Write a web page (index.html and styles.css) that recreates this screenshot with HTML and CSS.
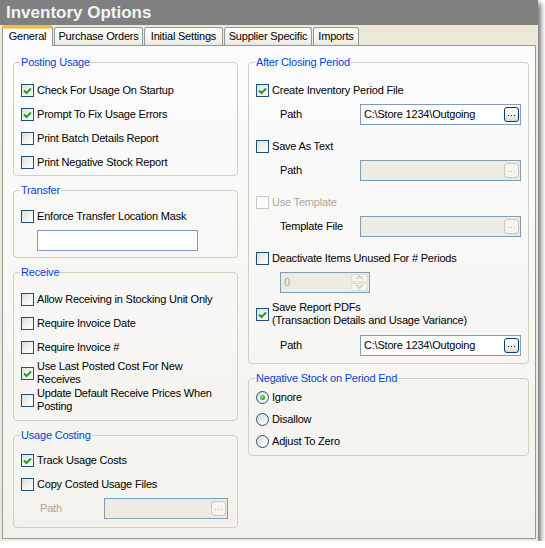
FILE: index.html
```html
<!DOCTYPE html>
<html>
<head>
<meta charset="utf-8">
<title>Inventory Options</title>
<link rel="stylesheet" href="styles.css">
</head>
<body>
<div class="window">
  <div class="titlebar">Inventory Options</div>
  <div class="tabs">
    <div class="tab active w-general">General</div>
    <div class="tab w-po">Purchase Orders</div>
    <div class="tab w-is">Initial Settings</div>
    <div class="tab w-ss">Supplier Specific</div>
    <div class="tab w-imp">Imports</div>
  </div>
  <div class="panel">
    <div class="col">
      <fieldset class="group g-posting">
        <legend>Posting Usage</legend>
        <label class="row"><span class="cb"><svg viewBox="0 0 11 11"><polyline points="2,5.5 4.5,8 9,3.5"/></svg></span>Check For Usage On Startup</label>
        <label class="row"><span class="cb"><svg viewBox="0 0 11 11"><polyline points="2,5.5 4.5,8 9,3.5"/></svg></span>Prompt To Fix Usage Errors</label>
        <label class="row"><span class="cb"></span>Print Batch Details Report</label>
        <label class="row"><span class="cb"></span>Print Negative Stock Report</label>
      </fieldset>

      <fieldset class="group g-transfer">
        <legend>Transfer</legend>
        <label class="row"><span class="cb"></span>Enforce Transfer Location Mask</label>
        <div class="input mask"></div>
      </fieldset>

      <fieldset class="group g-receive">
        <legend>Receive</legend>
        <label class="row"><span class="cb"></span>Allow Receiving in Stocking Unit Only</label>
        <label class="row"><span class="cb"></span>Require Invoice Date</label>
        <label class="row"><span class="cb"></span>Require Invoice #</label>
        <label class="row two"><span class="cb"><svg viewBox="0 0 11 11"><polyline points="2,5.5 4.5,8 9,3.5"/></svg></span><span>Use Last Posted Cost For New<br>Receives</span></label>
        <label class="row two"><span class="cb"></span><span>Update Default Receive Prices When<br>Posting</span></label>
      </fieldset>

      <fieldset class="group g-costing">
        <legend>Usage Costing</legend>
        <label class="row"><span class="cb"><svg viewBox="0 0 11 11"><polyline points="2,5.5 4.5,8 9,3.5"/></svg></span>Track Usage Costs</label>
        <label class="row"><span class="cb"></span>Copy Costed Usage Files</label>
        <div class="field small">
          <span class="lbl disabled">Path</span>
          <div class="input disabled-in cost-path"><span class="ell off"><svg viewBox="0 0 13 13"><rect x="3" y="7" width="1" height="1"/><rect x="6" y="7" width="1" height="1"/><rect x="9" y="7" width="1" height="1"/></svg></span></div>
        </div>
      </fieldset>
    </div>

    <div class="col">
      <fieldset class="group g-after">
        <legend>After Closing Period</legend>
        <label class="row"><span class="cb"><svg viewBox="0 0 11 11"><polyline points="2,5.5 4.5,8 9,3.5"/></svg></span>Create Inventory Period File</label>
        <div class="field">
          <span class="lbl">Path</span>
          <div class="input path"><span class="val">C:\Store 1234\Outgoing</span><span class="ell"><svg viewBox="0 0 13 13"><rect x="3" y="7" width="1" height="1"/><rect x="6" y="7" width="1" height="1"/><rect x="9" y="7" width="1" height="1"/></svg></span></div>
        </div>
        <label class="row sp"><span class="cb"></span>Save As Text</label>
        <div class="field">
          <span class="lbl">Path</span>
          <div class="input path disabled-in"><span class="val"></span><span class="ell off"><svg viewBox="0 0 13 13"><rect x="3" y="7" width="1" height="1"/><rect x="6" y="7" width="1" height="1"/><rect x="9" y="7" width="1" height="1"/></svg></span></div>
        </div>
        <label class="row sp dis"><span class="cb off"></span>Use Template</label>
        <div class="field">
          <span class="lbl">Template File</span>
          <div class="input path disabled-in"><span class="val"></span><span class="ell off"><svg viewBox="0 0 13 13"><rect x="3" y="7" width="1" height="1"/><rect x="6" y="7" width="1" height="1"/><rect x="9" y="7" width="1" height="1"/></svg></span></div>
        </div>
        <label class="row sp"><span class="cb"></span>Deactivate Items Unused For # Periods</label>
        <div class="field">
          <div class="input spin disabled-in"><span class="val grey">0</span>
            <span class="spinbtns"><span class="sb"><svg viewBox="0 0 9 5"><polyline points="1.5,4 4.5,1 7.5,4"/></svg></span><span class="sb"><svg viewBox="0 0 9 5"><polyline points="1.5,1 4.5,4 7.5,1"/></svg></span></span>
          </div>
        </div>
        <label class="row two sp2"><span class="cb"><svg viewBox="0 0 11 11"><polyline points="2,5.5 4.5,8 9,3.5"/></svg></span><span>Save Report PDFs<br>(Transaction Details and Usage Variance)</span></label>
        <div class="field sp3">
          <span class="lbl">Path</span>
          <div class="input path"><span class="val">C:\Store 1234\Outgoing</span><span class="ell"><svg viewBox="0 0 13 13"><rect x="3" y="7" width="1" height="1"/><rect x="6" y="7" width="1" height="1"/><rect x="9" y="7" width="1" height="1"/></svg></span></div>
        </div>
      </fieldset>

      <fieldset class="group g-neg">
        <legend>Negative Stock on Period End</legend>
        <label class="radio"><span class="rb on"></span>Ignore</label>
        <label class="radio"><span class="rb"></span>Disallow</label>
        <label class="radio"><span class="rb"></span>Adjust To Zero</label>
      </fieldset>
    </div>
  </div>
</div>
</body>
</html>
```

FILE: styles.css
```css
* { box-sizing: border-box; }
html, body { margin: 0; padding: 0; background: #ffffff; }
body {
  font-family: "Liberation Sans", Arial, sans-serif;
  font-size: 11px;
  letter-spacing: -0.2px;
  color: #000;
}

.window {
  width: 538px;
  height: 541px;
  background: #ece9d8;
  display: flex;
  flex-direction: column;
  box-shadow: 3px 3px 5px rgba(0, 0, 0, 0.55);
}

.titlebar {
  height: 25px;
  flex: none;
  background: #808080;
  color: #f4f4f4;
  font-weight: bold;
  font-size: 17px;
  letter-spacing: 0;
  line-height: 25px;
  padding-left: 6px;
}

.tabs {
  height: 20px;
  flex: none;
  display: flex;
  align-items: flex-end;
  gap: 1px;
  padding-left: 2px;
  position: relative;
  z-index: 2;
}
.tab {
  height: 18px;
  border: 1px solid #919b9c;
  border-bottom: none;
  border-radius: 3px 3px 0 0;
  background: linear-gradient(#ffffff, #f3f2ec 70%, #e8e6dc);
  text-align: center;
  line-height: 17px;
  white-space: nowrap;
}
.tab.active {
  height: 21px;
  margin-bottom: -1px;
  border-top: 3px solid #f9b845;
  box-shadow: inset 0 1px 0 #ffd77a;
  background: #fcfcfe;
  line-height: 16px;
  border-radius: 3px 3px 0 0;
}
.w-general { width: 51px; }
.w-po { width: 89px; }
.w-is { width: 79px; }
.w-ss { width: 88px; }
.w-imp { width: 46px; }

.panel {
  flex: 1;
  margin: 0 2px 2px 2px;
  border: 1px solid #919b9c;
  background: linear-gradient(#fcfcfe, #f3f2ec);
  padding: 10px 0 0 10px;
  display: grid;
  grid-template-columns: 225px 281px;
  column-gap: 10px;
  align-items: start;
}

.col { display: flex; flex-direction: column; }

.group {
  margin: 0;
  padding: 0 7px;
  border: 1px solid #d0d0bf;
  border-radius: 4px;
  min-width: 0;
}
.group + .group { margin-top: 8px; }
.group legend {
  color: #0046d5;
  line-height: 13px;
  padding: 0 1px;
  margin-left: -1px;
}

.g-posting { padding-top: 9px; padding-bottom: 1px; }
.g-transfer { padding-top: 7px; padding-bottom: 6px; }
.g-receive { padding-top: 8px; padding-bottom: 7px; }
.g-costing { padding-top: 6px; padding-bottom: 7px; }
.g-after { padding-top: 9px; padding-bottom: 6px; }
.g-neg { padding-top: 1px; padding-bottom: 3px; }

.row {
  display: flex;
  align-items: center;
  height: 24px;
  gap: 3px;
  white-space: nowrap;
}
.row.two { height: 26px; line-height: 13px; margin-top: 1px; }
.row.sp { margin-top: 8px; }
.row.sp2 { margin-top: 7px; }
.field.sp3 { margin-top: 6px; }
.row.dis { color: #aca899; }

.cb {
  width: 13px;
  height: 13px;
  flex: none;
  border: 1px solid #1c5180;
  background: linear-gradient(135deg, #dcdcd7 0%, #f3f3f0 55%, #ffffff 100%);
  display: flex;
}
.cb.off { border-color: #cac8bb; background: #ffffff; }
.cb svg { width: 11px; height: 11px; }
.cb polyline { fill: none; stroke: #21a121; stroke-width: 2; }

.input {
  height: 21px;
  border: 1px solid #7f9db9;
  background: #ffffff;
  display: flex;
  align-items: center;
}
.input.mask { width: 161px; margin: 2px 0 0 16px; }
.input.disabled-in { background: #ecebe4; }

.field {
  display: flex;
  align-items: center;
  height: 24px;
  padding-left: 24px;
}
.field.small { padding-left: 19px; }
.lbl { width: 80px; flex: none; }
.field.small .lbl { width: 64px; }
.lbl.disabled { color: #aca899; }

.input.path { width: 162px; padding: 0 1px 0 3px; }
.input.cost-path { width: 124px; justify-content: flex-end; padding-right: 1px; }
.val { flex: 1; white-space: nowrap; overflow: hidden; }
.val.grey { color: #aca899; padding-left: 3px; }

.ell {
  width: 15px;
  height: 15px;
  flex: none;
  border: 1px solid #003c74;
  border-radius: 3px;
  background: linear-gradient(#ffffff, #f0efe8 60%, #dcdad0);
  display: flex;
}
.ell svg { width: 13px; height: 13px; }
.ell rect { fill: #000000; }
.ell.off {
  border-color: #cac8bb;
  background: #f5f4ee;
}
.ell.off rect { fill: #bdbbae; }

.input.spin { width: 90px; height: 21px; padding-right: 1px; }
.spinbtns {
  width: 17px;
  height: 17px;
  display: flex;
  flex-direction: column;
  gap: 1px;
}
.sb {
  flex: 1;
  border: 1px solid #e0ded2;
  border-radius: 2px;
  background: #f5f4ef;
  display: flex;
  align-items: center;
  justify-content: center;
}
.sb svg { width: 9px; height: 5px; }
.sb polyline { fill: none; stroke: #c9c7ba; stroke-width: 1.4; }

.radio {
  display: flex;
  align-items: center;
  height: 22px;
  gap: 3px;
}
.rb {
  width: 13px;
  height: 13px;
  flex: none;
  border-radius: 50%;
  border: 1px solid #1c5180;
  background: linear-gradient(135deg, #dcdcd7, #ffffff);
  display: flex;
  align-items: center;
  justify-content: center;
}
.rb.on::after {
  content: "";
  width: 5px;
  height: 5px;
  border-radius: 50%;
  background: radial-gradient(circle at 40% 40%, #8ef08e, #21a121 70%);
}
```
